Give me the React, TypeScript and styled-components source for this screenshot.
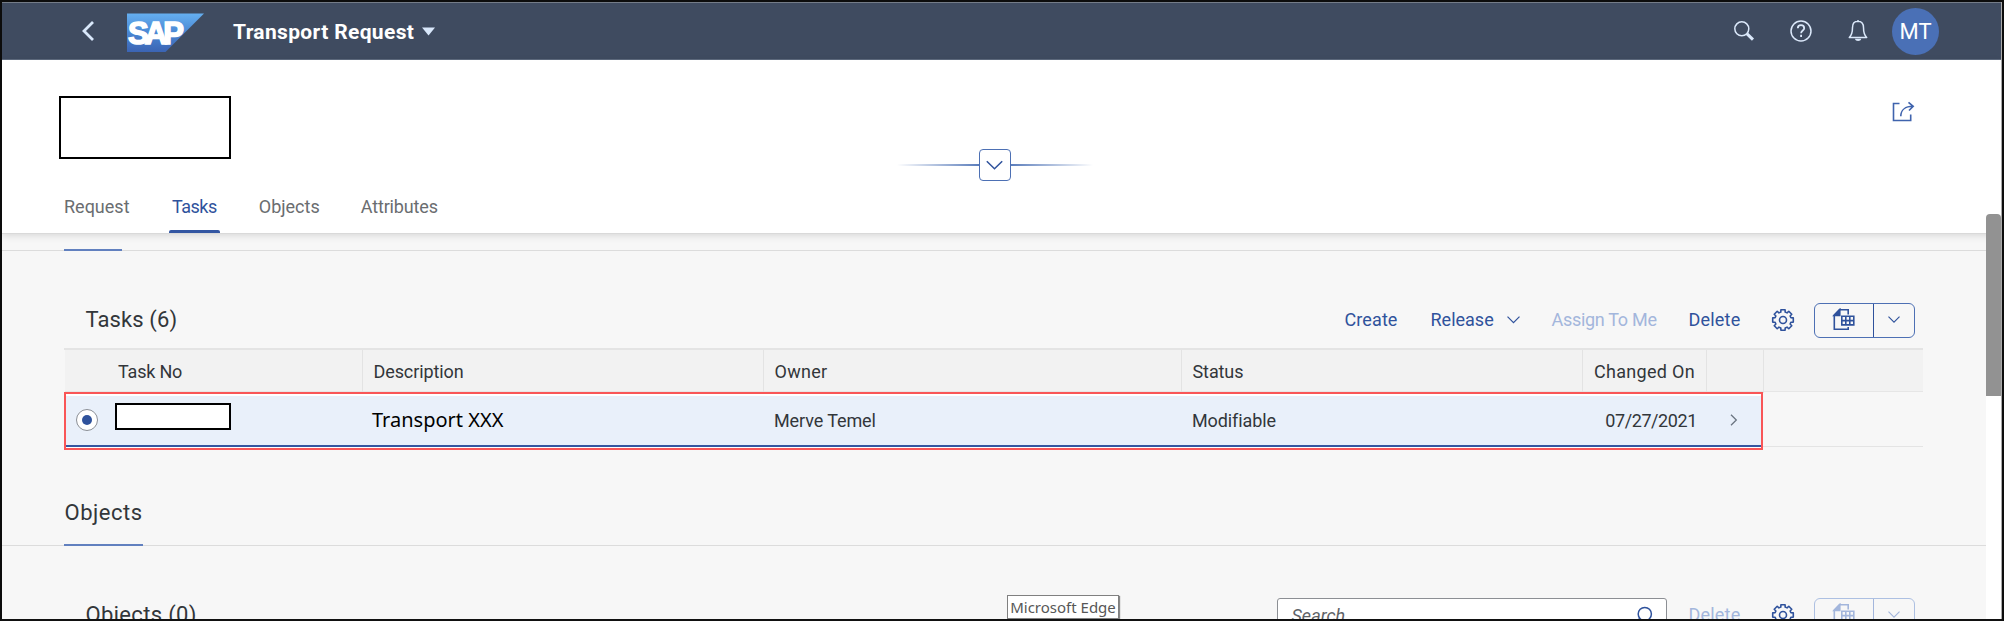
import React from 'react';
import styled, { createGlobalStyle, css } from 'styled-components';

const Global = createGlobalStyle`
  * { box-sizing: border-box; }
  body { margin: 0; background: #fff; font-family: Roboto, "Noto Sans", sans-serif; color: #32363a; }
`;

const blue = '#2f529c';
const paleBlue = '#a3b6dc';

const Frame = styled.div`
  position: relative;
  display: flex;
  flex-direction: column;
  width: 2004px;
  height: 621px;
  overflow: hidden;
  border: 2px solid #0c0c0c;
  border-bottom-color: #111;
  background: #f7f7f7;
`;

const Shell = styled.header`
  display: flex;
  align-items: center;
  flex: none;
  height: 58px;
  padding: 0 63px 0 79px;
  background: #3f4b60;
  border-top: 1px solid #747c88;
  border-bottom: 1px solid #5f6b7f;
  color: #fff;
`;

const BackIcon = styled.svg`
  width: 14px;
  height: 22px;
  margin-right: 31px;
`;

const Logo = styled.svg`
  width: 78px;
  height: 40px;
  margin: 3px 29px 0 0;
`;

const AppTitle = styled.h1`
  margin: 1px 8px 0 0;
  font-size: 21px;
  font-weight: 700;
  line-height: 28px;
  letter-spacing: 0.35px;
`;

const Caret = styled.svg`
  width: 13px;
  height: 9px;
`;

const ShellActions = styled.div`
  display: flex;
  align-items: center;
  margin-left: auto;
  svg { flex: none; }
`;

const ShellIcon = styled.svg<{ $gap: number }>`
  width: 24px;
  height: 24px;
  margin-right: ${(p) => p.$gap}px;
`;

const Avatar = styled.div`
  display: flex;
  align-items: center;
  justify-content: center;
  width: 47px;
  height: 47px;
  border-radius: 50%;
  background: #4a70b6;
  font-size: 22px;
`;

const PageHeader = styled.section`
  position: relative;
  display: flex;
  flex-direction: column;
  flex: none;
  height: 174px;
  background: #fff;
  border-bottom: 1px solid #d9d9d9;
  box-shadow: 0 2px 7px rgba(0, 0, 0, 0.12);
`;

const HeaderTop = styled.div`
  display: flex;
  align-items: flex-start;
  justify-content: space-between;
  padding: 36px 87px 0 57px;
  height: 88px;
`;

const RedactedBox = styled.div<{ $w: number; $h: number }>`
  flex: none;
  width: ${(p) => p.$w}px;
  height: ${(p) => p.$h}px;
  border: 2px solid #000;
  background: #fff;
`;

const ShareIcon = styled.svg`
  width: 24px;
  height: 24px;
  margin-top: 3px;
`;

const ExpandRow = styled.div`
  display: flex;
  align-items: center;
  justify-content: center;
  height: 34px;
  padding-right: 15px;
`;

const FadeLine = styled.span<{ $to: 'left' | 'right' }>`
  width: 82px;
  height: 2px;
  background: linear-gradient(to ${(p) => p.$to}, #5b7dbb, rgba(91, 125, 187, 0));
`;

const ExpandButton = styled.button`
  display: flex;
  align-items: center;
  justify-content: center;
  width: 32px;
  height: 32px;
  padding: 0;
  border: 1.5px solid #4d70b4;
  border-radius: 4px;
  background: #fff;
`;

const Tabs = styled.nav`
  display: flex;
  flex: 1;
  padding-left: 58px;
`;

const Tab = styled.a<{ $active?: boolean; $gap: number; $ls?: number }>`
  display: flex;
  flex-direction: column;
  justify-content: flex-end;
  align-items: center;
  padding: 0 4px;
  margin-right: ${(p) => p.$gap}px;
  font-size: 18px;
  line-height: 26px;
  letter-spacing: ${(p) => p.$ls ?? 0}px;
  color: ${(p) => (p.$active ? blue : '#6a6d70')};
  &::after {
    content: '';
    align-self: stretch;
    height: 3px;
    margin: 10px -3px 0;
    border-radius: 2px 2px 0 0;
    background: ${(p) => (p.$active ? '#3356a2' : 'transparent')};
  }
`;

const Content = styled.main`
  display: flex;
  flex-direction: column;
  width: 1984px;
`;

const SectionHead = styled.div<{ $h: number }>`
  display: flex;
  align-items: flex-end;
  flex: none;
  height: ${(p) => p.$h}px;
  padding-left: 62px;
  border-bottom: 1px solid #dcdcdc;
`;

const SectionTitle = styled.h2<{ $w: number }>`
  width: ${(p) => p.$w}px;
  margin: 0 0 -1px;
  padding-bottom: 16px;
  border-bottom: 2px solid #6180bf;
  font-size: 22px;
  font-weight: 400;
  line-height: 30px;
  letter-spacing: 0.5px;
  text-indent: 0.5px;
  white-space: nowrap;
`;

const EmptyTitle = styled(SectionTitle)`
  padding: 0;
`;

const Toolbar = styled.div`
  display: flex;
  align-items: center;
  flex: none;
  height: 56px;
  margin-top: 41px;
  padding: 0 71.5px 0 83.5px;
`;

const TableTitle = styled.h3<{ $ls: number }>`
  margin: 0 auto 0 0;
  font-size: 22px;
  font-weight: 400;
  line-height: 30px;
  letter-spacing: ${(p) => p.$ls}px;
`;

const Action = styled.button<{ $w: number; $gap: number; $disabled?: boolean; $ls?: number }>`
  display: flex;
  align-items: center;
  justify-content: space-between;
  width: ${(p) => p.$w}px;
  margin: 0 ${(p) => p.$gap}px 0 0;
  padding: 0;
  border: 0;
  background: none;
  font: 18px/26px Roboto, sans-serif;
  letter-spacing: ${(p) => p.$ls ?? 0}px;
  white-space: nowrap;
  color: ${(p) => (p.$disabled ? paleBlue : blue)};
`;

const GearSvg = styled.svg`
  width: 24px;
  height: 24px;
  margin-right: 19px;
`;

const Split = styled.div<{ $disabled?: boolean }>`
  display: grid;
  grid-template-columns: 59px 40px;
  height: 35px;
  width: 101px;
  border: 1.5px solid ${(p) => (p.$disabled ? '#adc0e2' : '#4d70b4')};
  border-radius: 6px;
  color: ${(p) => (p.$disabled ? '#a3b6dc' : '#2f529c')};
`;

const SplitPart = styled.span<{ $first?: boolean }>`
  display: flex;
  align-items: center;
  justify-content: center;
  ${(p) => p.$first && css`border-right: 1px solid currentColor;`}
`;

const Table = styled.div`
  width: 1859px;
  margin-left: 62px;
  border-top: 2px solid #e4e4e4;
`;

const columns = '298px 401px 418px 401px 124px 57px';

const HeadRow = styled.div`
  display: grid;
  grid-template-columns: ${columns} 1fr;
  height: 42px;
  margin-left: 1px;
  background: #f2f2f2;
  border-bottom: 1px solid #e6e6e6;
`;

const HeadCell = styled.div<{ $pad?: number; $end?: boolean; $ls?: number; $last?: boolean }>`
  padding-left: ${(p) => p.$pad ?? 10.5}px;
  ${(p) => p.$end && css`padding: 0 11px 0 0; text-align: right;`}
  ${(p) => !p.$last && css`border-right: 1px solid #e3e3e3;`}
  font-size: 18px;
  line-height: 43px;
  letter-spacing: ${(p) => p.$ls ?? 0}px;
  white-space: nowrap;
`;

const BodyRow = styled.div`
  display: flex;
  height: 58px;
`;

const Highlight = styled.div`
  width: 1699px;
  height: 58px;
  padding-top: 1.5px;
  border: 2px solid #f95657;
  background: #fff;
`;

const Selected = styled.div`
  display: grid;
  grid-template-columns: ${columns};
  height: 51px;
  background: #e9f0fa;
  border-bottom: 2px solid #3556a0;
`;

const Rest = styled.div`
  flex: 1;
  height: 55px;
  border-bottom: 1px solid #e4e4e4;
`;

const Cell = styled.div<{ $pad?: number; $end?: boolean; $ls?: number }>`
  display: flex;
  align-items: center;
  padding: 0 0 0 ${(p) => p.$pad ?? 9}px;
  ${(p) => p.$end && css`justify-content: flex-end; padding: 0 11px 0 0;`}
  font-size: 18px;
  letter-spacing: ${(p) => p.$ls ?? -0.1}px;
  white-space: nowrap;
`;

const Description = styled.span`
  font: 20px/28px "Noto Sans", sans-serif;
  letter-spacing: 0;
  color: #000;
`;

const Radio = styled.span`
  display: flex;
  align-items: center;
  justify-content: center;
  width: 22px;
  height: 22px;
  margin-right: 17px;
  border: 1px solid #8b8f96;
  border-radius: 50%;
  background: #fff;
  &::after {
    content: '';
    width: 10px;
    height: 10px;
    border-radius: 50%;
    background: ${blue};
  }
`;

const BoxLift = styled.div`
  margin-bottom: 8px;
`;

const SearchField = styled.div`
  display: flex;
  align-items: center;
  justify-content: space-between;
  width: 390px;
  height: 35px;
  margin-right: 22px;
  padding: 0 13px 0 14px;
  border: 1.5px solid #8c8f94;
  border-radius: 3px;
  background: #fff;
  color: #5f6367;
  font-size: 18px;
  font-style: italic;
`;

const Thumb = styled.div`
  height: 182px;
  margin-top: 212px;
  border-radius: 4px 4px 0 0;
  background: #929292;
`;

const Scrollbar = styled.div`
  position: absolute;
  top: 0;
  right: 0;
  width: 16px;
  height: 100%;
  pointer-events: none;
  border-right: 1px solid #aaa;
`;

const Track = styled.div`
  height: 240px;
  background: #fff;
`;

const Tooltip = styled.div`
  position: absolute;
  left: 1005px;
  top: 593px;
  width: 112px;
  height: 24px;
  border: 1px solid #808080;
  background: #fff;
  box-shadow: 1px 1px 1px rgba(0, 0, 0, 0.45);
  text-align: center;
  font: 15px/23px "Noto Sans", sans-serif;
  color: #575757;
  white-space: nowrap;
`;

const Chevron = ({ w = 13 }: { w?: number }) => (
  <svg width={w} height={w * 0.6} viewBox="0 0 15 9" fill="none" stroke="currentColor" strokeWidth="1.4">
    <path d="M.6 .8 7.5 7.7 14.4 .8" />
  </svg>
);

const gearPath = (() => {
  const pts: string[] = [];
  const teeth = 8;
  for (let i = 0; i < teeth; i++) {
    const base = (i * 2 * Math.PI) / teeth;
    [[-0.27, 8.2], [-0.2, 10.5], [0.2, 10.5], [0.27, 8.2]].forEach(([a, r]) => {
      pts.push(`${(12 + r * Math.sin(base + a)).toFixed(2)} ${(12 - r * Math.cos(base + a)).toFixed(2)}`);
    });
  }
  return `M${pts.join('L')}Z`;
})();

const Gear = () => (
  <GearSvg viewBox="0 0 24 24" fill="none" stroke={blue} strokeWidth="1.6" strokeLinejoin="round">
    <path d={gearPath} />
    <circle cx="12" cy="12" r="3.5" />
  </GearSvg>
);

const ExportIcon = () => (
  <svg width="24" height="24" viewBox="0 0 24 24" fill="none" stroke="currentColor" strokeWidth="1.6">
    <path d="M16.2 6.500V1.8H7.5L2.3 7v14.2h13.9V19" />
    <path d="M2 7.5 7.8 1.4v6.1z" fill="currentColor" />
    <path d="M9.8 8.3h12v8.6h-12zM9.8 12.6h12M13.8 8.3v8.6M17.8 8.3v8.6" />
  </svg>
);

const ExportSplit = ({ disabled }: { disabled?: boolean }) => (
  <Split $disabled={disabled}>
    <SplitPart $first><ExportIcon /></SplitPart>
    <SplitPart><Chevron w={12} /></SplitPart>
  </Split>
);

export default function App() {
  return (
    <>
      <Global />
      <Frame>
        <Shell>
          <BackIcon viewBox="0 0 14 22" fill="none" stroke="#d9e8fb" strokeWidth="2.8">
            <path d="M12 2 3 11l9 9" />
          </BackIcon>
          <Logo viewBox="0 0 78 40">
            <defs>
              <linearGradient id="sap" x1="0" y1="0" x2="0" y2="1">
                <stop offset="0" stopColor="#65aff0" />
                <stop offset="0.5" stopColor="#4a87d3" />
                <stop offset="1" stopColor="#3b64b4" />
              </linearGradient>
            </defs>
            <path d="M1 .5h77L39.5 39H1z" fill="url(#sap)" />
            <text x="2" y="30.8" fontFamily="Liberation Sans, sans-serif" fontWeight="700" fontSize="31" fill="#fff" stroke="#fff" strokeWidth="1.6" textLength="56" lengthAdjust="spacing">SAP</text>
          </Logo>
          <AppTitle>Transport Request</AppTitle>
          <Caret viewBox="0 0 13 9"><path d="M0 .5h13L6.5 8.5z" fill="#d9e8fb" /></Caret>
          <ShellActions>
            <ShellIcon $gap={33} viewBox="0 0 24 24" fill="none" stroke="#dbe8fa">
              <circle cx="9.8" cy="9.8" r="7" strokeWidth="1.5" />
              <path d="m14.8 14.6 6.2 6" strokeWidth="3" />
            </ShellIcon>
            <ShellIcon $gap={33} viewBox="0 0 24 24" fill="none" stroke="#dbe8fa" strokeWidth="1.5">
              <circle cx="12" cy="12" r="10" />
              <path d="M8.8 9.2c0-4 6.4-4 6.4 0 0 2.4-3.1 2.2-3.1 5M12.1 15.8v2.2" strokeWidth="1.8" />
            </ShellIcon>
            <ShellIcon $gap={22} viewBox="0 0 24 24" fill="none" stroke="#dbe8fa" strokeWidth="1.5" strokeLinejoin="round">
              <path d="M12 2.3c-3.7 0-5.5 2.6-5.5 6.2 0 4.6-.4 7.3-3.2 10h17.4c-2.8-2.7-3.2-5.4-3.2-10 0-3.6-1.8-6.2-5.5-6.2z" />
              <path d="M9 19.8h6.2c-.3 3-5.9 3-6.2 0z" fill="#dbe8fa" stroke="none" />
              <path d="M12 1v1.5" />
            </ShellIcon>
            <Avatar>MT</Avatar>
          </ShellActions>
        </Shell>

        <PageHeader>
          <HeaderTop>
            <RedactedBox $w={172} $h={63} />
            <ShareIcon viewBox="0 0 24 24" fill="none" stroke="#3f63ad" strokeWidth="1.6">
              <path d="M8.5 4.500H2.5v17H19.700v-6" />
              <path d="M9.8 17.2c0-6 4.5-9.9 12.2-9.9M17.5 3.3l4.7 4-4.2 4.2" />
            </ShareIcon>
          </HeaderTop>
          <ExpandRow>
            <FadeLine $to="left" />
            <ExpandButton>
              <svg width="17" height="10" viewBox="0 0 17 10" fill="none" stroke={blue} strokeWidth="1.5">
                <path d="m.8 1.2 7.7 7.6 7.7-7.6" />
              </svg>
            </ExpandButton>
            <FadeLine $to="right" />
          </ExpandRow>
          <Tabs>
            <Tab $gap={34.5}>Request</Tab>
            <Tab $active $gap={34} $ls={-0.5}>Tasks</Tab>
            <Tab $gap={33}>Objects</Tab>
            <Tab $gap={0} $ls={-0.15}>Attributes</Tab>
          </Tabs>
        </PageHeader>

        <Content>
          <SectionHead $h={17}><EmptyTitle $w={58} /></SectionHead>
          <Toolbar>
            <TableTitle $ls={0.1}>Tasks (6)</TableTitle>
            <Action $w={54} $gap={32} $ls={0.1}>Create</Action>
            <Action $w={89} $gap={32}>Release <Chevron /></Action>
            <Action $w={105} $gap={32} $disabled $ls={-0.3}>Assign To Me</Action>
            <Action $w={52} $gap={30} $ls={0.2}>Delete</Action>
            <Gear />
            <ExportSplit />
          </Toolbar>
          <Table>
            <HeadRow>
              <HeadCell $pad={53} $ls={-0.2}>Task No</HeadCell>
              <HeadCell $ls={-0.1}>Description</HeadCell>
              <HeadCell $ls={0.3}>Owner</HeadCell>
              <HeadCell $ls={-0.1}>Status</HeadCell>
              <HeadCell $end $ls={0.3}>Changed On</HeadCell>
              <HeadCell />
              <HeadCell $last />
            </HeadRow>
            <BodyRow>
              <Highlight>
                <Selected>
                  <Cell $pad={10}>
                    <Radio />
                    <BoxLift><RedactedBox $w={116} $h={27} /></BoxLift>
                  </Cell>
                  <Cell $pad={8}><Description>Transport XXX</Description></Cell>
                  <Cell>Merve Temel</Cell>
                  <Cell>Modifiable</Cell>
                  <Cell $end $ls={-0.4}>07/27/2021</Cell>
                  <Cell $pad={22}>
                    <svg width="8" height="12" viewBox="0 0 8 12" fill="none" stroke="#6a7480" strokeWidth="1.3">
                      <path d="m1 .8 5.3 5.2L1 11.2" />
                    </svg>
                  </Cell>
                </Selected>
              </Highlight>
              <Rest />
            </BodyRow>
          </Table>
          <SectionHead $h={96}><SectionTitle $w={79}>Objects</SectionTitle></SectionHead>
          <Toolbar>
            <TableTitle $ls={0.35}>Objects (0)</TableTitle>
            <SearchField>
              Search
              <svg width="18" height="18" viewBox="0 0 18 18" fill="none" stroke={blue}>
                <circle cx="9.8" cy="8" r="6.6" strokeWidth="1.5" />
                <path d="M5 12.8 1 16.8" strokeWidth="2.5" />
              </svg>
            </SearchField>
            <Action $w={52} $gap={30} $disabled $ls={0.2}>Delete</Action>
            <Gear />
            <ExportSplit disabled />
          </Toolbar>
        </Content>

        <Scrollbar><Thumb /><Track /></Scrollbar>
        <Tooltip>Microsoft Edge</Tooltip>
      </Frame>
    </>
  );
}
